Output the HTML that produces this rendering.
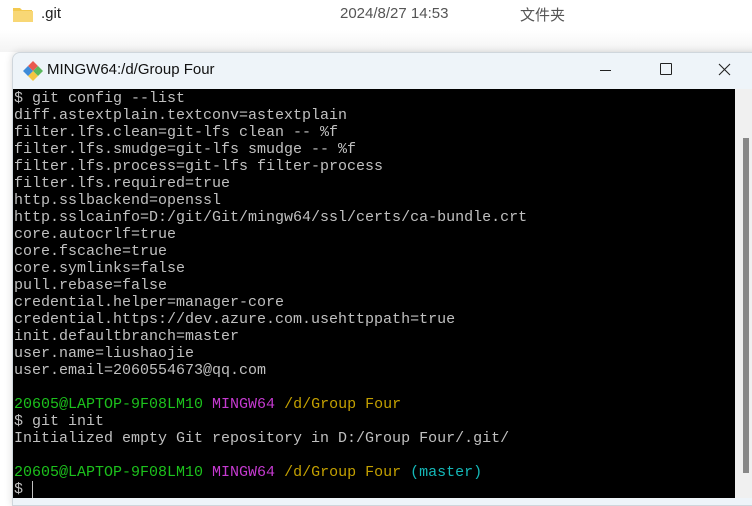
<!DOCTYPE html>
<html><head><meta charset="utf-8"><style>
body{margin:0;width:752px;height:501px;overflow:hidden;background:#fff;position:relative;font-family:"Liberation Sans","Noto Sans CJK SC",sans-serif}
.top{position:absolute;top:0;left:0;width:752px;height:52px;background:linear-gradient(#fff 0,#fff 30px,#f4f4f4 52px)}
.win{position:absolute;left:12px;top:52px;width:745px;height:452px;background:#eef4f9;border:1px solid #cfd6dc;border-radius:8px 0 0 0;box-shadow:0 0 8px rgba(0,0,0,.15)}
.term{position:absolute;left:13px;top:89px;width:722px;height:409px;background:#000}
.sb{position:absolute;left:735px;top:89px;width:17px;height:409px;background:#f0f0f0}
.thumb{position:absolute;left:743px;top:138px;width:6px;height:335px;background:#888}
pre{margin:0;position:absolute;left:14px;top:90px;font:15px/17px "Liberation Mono",monospace;color:#c0c0c0;letter-spacing:0}
.g{color:#1cc11c}.m{color:#c53ad0}.y{color:#c3a000}.c{color:#14b8b8}
</style></head><body>
<div class="top"></div>
<svg style="position:absolute;left:12px;top:5px" width="22" height="18"><path d="M1 3h7l2 2h10v12H1z" fill="#f3c94f"/><path d="M1 6h20v11H1z" fill="#f8d775"/></svg>
<div style="position:absolute;left:41px;top:5px;font-size:15px;color:#222">.git</div>
<div style="position:absolute;left:340px;top:5px;font-size:15px;color:#555">2024/8/27 14:53</div>
<div style="position:absolute;left:520px;top:4px;font-size:15px;color:#555">文件夹</div>
<div class="win"></div>
<svg style="position:absolute;left:22px;top:60px" width="22" height="22" viewBox="0 0 22 22"><path d="M11 1l5 5-5 5-5-5z" fill="#e95a4f"/><path d="M16 6l5 5-5 5-5-5z" fill="#5bb85d"/><path d="M11 11l5 5-5 5-5-5z" fill="#f4c542"/><path d="M6 6l5 5-5 5-5-5z" fill="#3d8bd9"/></svg>
<div style="position:absolute;left:47px;top:61px;font-size:15px;color:#111">MINGW64:/d/Group Four</div>
<div style="position:absolute;left:600px;top:70px;width:11px;height:1px;background:#222"></div>
<div style="position:absolute;left:660px;top:63px;width:10px;height:10px;border:1px solid #222;border-radius:1px"></div>
<svg style="position:absolute;left:718px;top:63px" width="13" height="13"><path d="M1 1L12 12M12 1L1 12" stroke="#222" stroke-width="1.1"/></svg>
<div class="term"></div><div class="sb"></div><div class="thumb"></div>
<pre>$ git config --list
diff.astextplain.textconv=astextplain
filter.lfs.clean=git-lfs clean -- %f
filter.lfs.smudge=git-lfs smudge -- %f
filter.lfs.process=git-lfs filter-process
filter.lfs.required=true
http.sslbackend=openssl
http.sslcainfo=D:/git/Git/mingw64/ssl/certs/ca-bundle.crt
core.autocrlf=true
core.fscache=true
core.symlinks=false
pull.rebase=false
credential.helper=manager-core
credential.https://dev.azure.com.usehttppath=true
init.defaultbranch=master
user.name=liushaojie
user.email=2060554673@qq.com

<span class="g">20605@LAPTOP-9F08LM10</span> <span class="m">MINGW64</span> <span class="y">/d/Group Four</span>
$ git init
Initialized empty Git repository in D:/Group Four/.git/

<span class="g">20605@LAPTOP-9F08LM10</span> <span class="m">MINGW64</span> <span class="y">/d/Group Four</span> <span class="c">(master)</span>
$ <span style="border-left:1px solid #c0c0c0"></span></pre>
</body></html>
